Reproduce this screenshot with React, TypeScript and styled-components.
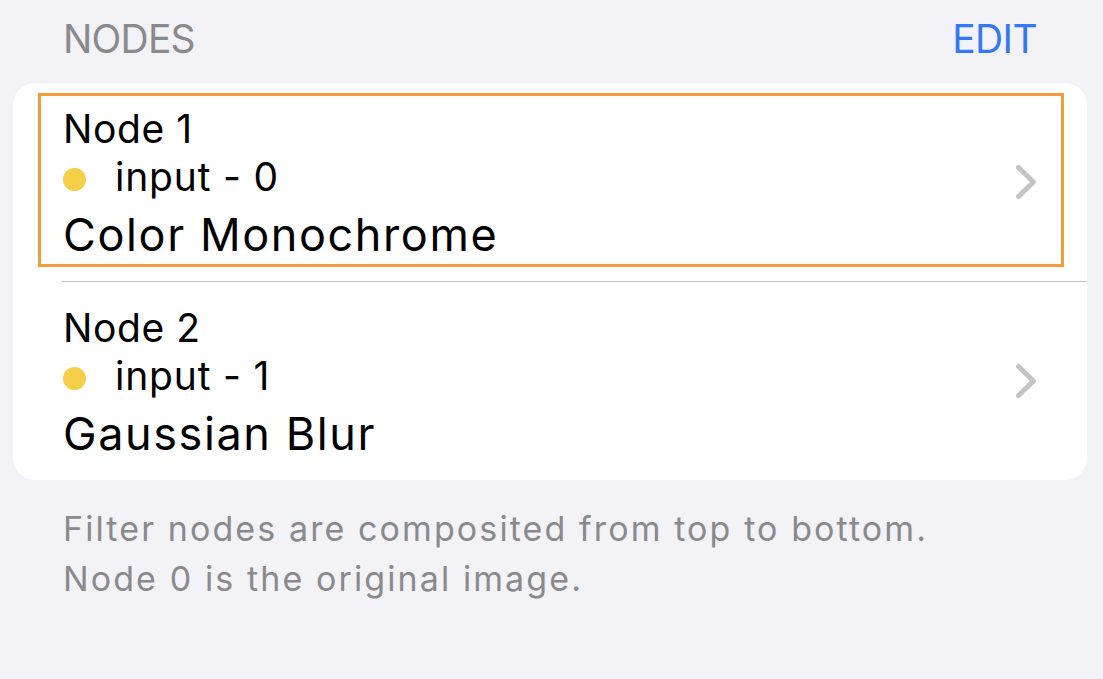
import React from "react";
import styled, { createGlobalStyle } from "styled-components";

const Global = createGlobalStyle`
  html, body {
    margin: 0;
    padding: 0;
    background: #f2f2f7;
    font-family: Inter, "Noto Sans", sans-serif;
    -webkit-font-smoothing: antialiased;
  }
`;

const Page = styled.div`
  width: 1103px;
  height: 679px;
  background: #f2f2f7;
  box-sizing: border-box;
  padding-top: 15px;
`;

const Header = styled.div`
  display: flex;
  justify-content: space-between;
  align-items: baseline;
  padding: 0 66px 0 63px;
  height: 48px;
  font-size: 39px;
  line-height: 48px;
`;

const HeaderTitle = styled.span`
  color: #8a8a8e;
  letter-spacing: -0.8px;
`;

const HeaderAction = styled.span`
  color: #3478f6;
  letter-spacing: -0.6px;
`;

const Card = styled.div`
  margin: 20px 16px 0 13px;
  background: #ffffff;
  border-radius: 22px;
  overflow: hidden;
`;

const Row = styled.div`
  height: 198px;
  box-sizing: border-box;
  padding: 10px 23px 0 25px;
`;

const Separator = styled.div`
  height: 1px;
  margin-left: 48px;
  background: #c6c6c8;
`;

const Box = styled.div<{ $focused?: boolean }>`
  height: 174px;
  box-sizing: border-box;
  border: 3px solid ${(p) => (p.$focused ? "#f39c3b" : "transparent")};
  padding: 9px 24px 0 22px;
  display: flex;
  align-items: center;
`;

const Content = styled.div`
  flex: 1;
  display: flex;
  flex-direction: column;
  align-self: stretch;
`;

const NodeTitle = styled.div`
  font-size: 39px;
  line-height: 48px;
  color: #000;
  letter-spacing: 0.6px;
`;

const InputLine = styled.div`
  display: flex;
  align-items: center;
  font-size: 39px;
  line-height: 48px;
  color: #000;
  letter-spacing: 0.8px;
`;

const Dot = styled.span`
  width: 23px;
  height: 23px;
  border-radius: 50%;
  background: #f5cf47;
  margin-right: 29px;
  margin-top: 4px;
`;

const FilterName = styled.div`
  margin-top: 4px;
  font-size: 45px;
  line-height: 60px;
  color: #000;
  letter-spacing: 1.6px;
`;

const Chevron = () => (
  <svg width="22" height="36" viewBox="0 0 22 36" style={{ marginTop: -6 }}>
    <path
      d="M3.5 3.5 L18.5 18 L3.5 32.5"
      fill="none"
      stroke="#c4c4c7"
      strokeWidth="5"
      strokeLinecap="round"
      strokeLinejoin="round"
    />
  </svg>
);

const Footer = styled.div`
  padding: 24px 40px 0 63px;
  font-size: 34px;
  line-height: 50px;
  color: #8a8a8e;
  letter-spacing: 2.1px;
`;

const nodes = [
  { title: "Node 1", input: "input - 0", filter: "Color Monochrome", focused: true },
  { title: "Node 2", input: "input - 1", filter: "Gaussian Blur", focused: false },
];

export default function App() {
  return (
    <Page>
      <Global />
      <Header>
        <HeaderTitle>NODES</HeaderTitle>
        <HeaderAction>EDIT</HeaderAction>
      </Header>
      <Card>
        {nodes.map((n, i) => (
          <React.Fragment key={n.title}>
            <Row>
              <Box $focused={n.focused}>
                <Content>
                  <NodeTitle>{n.title}</NodeTitle>
                  <InputLine>
                    <Dot />
                    {n.input}
                  </InputLine>
                  <FilterName>{n.filter}</FilterName>
                </Content>
                <Chevron />
              </Box>
            </Row>
            {i < nodes.length - 1 && <Separator />}
          </React.Fragment>
        ))}
      </Card>
      <Footer>
        Filter nodes are composited from top to bottom.
        <br />
        Node 0 is the original image.
      </Footer>
    </Page>
  );
}
